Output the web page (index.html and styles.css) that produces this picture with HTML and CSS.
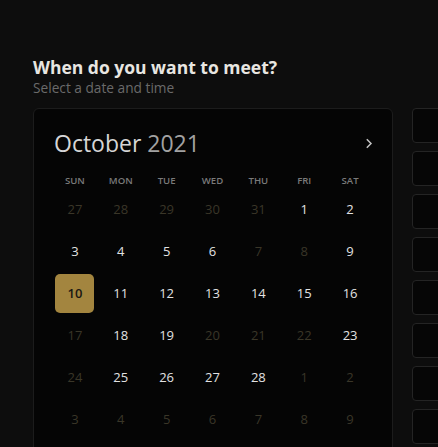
FILE: index.html
```html
<!DOCTYPE html>
<html lang="en">
<head>
<meta charset="utf-8">
<title>When do you want to meet?</title>
<link rel="stylesheet" href="styles.css">
</head>
<body>
<main class="page">
  <h1 class="title">When do you want to meet?</h1>
  <p class="subtitle">Select a date and time</p>
  <div class="picker">
    <section class="calendar">
      <header class="cal-head">
        <h2 class="month">October <span class="year">2021</span></h2>
        <button class="nav" aria-label="Next month">
          <svg width="8" height="11" viewBox="0 0 8 11"><path d="M1.8 1.2 L6 5.5 L1.8 9.8" fill="none" stroke="#c4c4c4" stroke-width="1.5"/></svg>
        </button>
      </header>
      <div class="weekdays">
        <span>Sun</span><span>Mon</span><span>Tue</span><span>Wed</span><span>Thu</span><span>Fri</span><span>Sat</span>
      </div>
      <div class="days">
        <span class="day off">27</span><span class="day off">28</span><span class="day off">29</span><span class="day off">30</span><span class="day off">31</span><span class="day">1</span><span class="day">2</span>
        <span class="day">3</span><span class="day">4</span><span class="day">5</span><span class="day">6</span><span class="day off">7</span><span class="day off">8</span><span class="day">9</span>
        <span class="day selected">10</span><span class="day">11</span><span class="day">12</span><span class="day">13</span><span class="day">14</span><span class="day">15</span><span class="day">16</span>
        <span class="day off">17</span><span class="day">18</span><span class="day">19</span><span class="day off">20</span><span class="day off">21</span><span class="day off">22</span><span class="day">23</span>
        <span class="day off">24</span><span class="day">25</span><span class="day">26</span><span class="day">27</span><span class="day">28</span><span class="day off">1</span><span class="day off">2</span>
        <span class="day off">3</span><span class="day off">4</span><span class="day off">5</span><span class="day off">6</span><span class="day off">7</span><span class="day off">8</span><span class="day off">9</span>
      </div>
    </section>
    <div class="slots">
      <div class="slot"></div><div class="slot"></div><div class="slot"></div><div class="slot"></div>
      <div class="slot"></div><div class="slot"></div><div class="slot"></div><div class="slot"></div>
    </div>
  </div>
</main>
</body>
</html>
```
FILE: styles.css
```css
html, body {
  margin: 0;
  height: 100%;
  overflow: hidden;
  background: #0d0d0d;
}
body {
  font-family: "Open Sans", "Liberation Sans", sans-serif;
  color: #e6e6e6;
}
.page {
  padding: 55px 0 0 33px;
}
.title {
  margin: 0;
  font-size: 17.5px;
  line-height: 24px;
  font-weight: 700;
  color: #e8e6e1;
}
.subtitle {
  margin: 0;
  font-size: 13.7px;
  line-height: 17px;
  color: #6a6a6a;
}
.picker {
  display: flex;
  gap: 19px;
  margin-top: 12px;
  width: 560px;
}
.calendar {
  box-sizing: border-box;
  width: 360px;
  flex: none;
  height: 400px;
  padding: 18px 19px 0 18px;
  background: #050505;
  border: 1px solid #1c1c1c;
  border-radius: 6px;
}
.cal-head {
  display: flex;
  align-items: center;
  justify-content: space-between;
  height: 32px;
}
.month {
  margin: 0;
  font-size: 23px;
  line-height: 32px;
  font-weight: 400;
  color: #d6d6d6;
  padding-left: 2px;
}
.year {
  color: #a2a2a2;
}
.nav {
  background: none;
  border: 0;
  padding: 0;
  margin-right: 0;
  width: 8px;
  height: 11px;
  display: flex;
}
.weekdays {
  display: grid;
  grid-template-columns: repeat(7, 1fr);
  margin-top: 14px;
  height: 15px;
  font-size: 9.6px;
  line-height: 15px;
  font-weight: 600;
  text-transform: uppercase;
  text-align: center;
  color: #7a7a7a;
}
.days {
  display: grid;
  grid-template-columns: repeat(7, 1fr);
  grid-auto-rows: 42px;
  justify-items: center;
  align-items: center;
}
.day {
  width: 39px;
  height: 39px;
  display: flex;
  align-items: center;
  justify-content: center;
  font-size: 13px;
  color: #e2e2e2;
  border-radius: 5px;
}
.day.off {
  color: #3a3628;
}
.day.selected {
  background: #a3853f;
  color: #1a1712;
  font-weight: 600;
}
.slots {
  display: flex;
  flex-direction: column;
  gap: 8px;
  width: 140px;
  flex: none;
}
.slot {
  height: 35px;
  box-sizing: border-box;
  background: #060606;
  border: 1px solid #242424;
  border-radius: 4px;
}
```
